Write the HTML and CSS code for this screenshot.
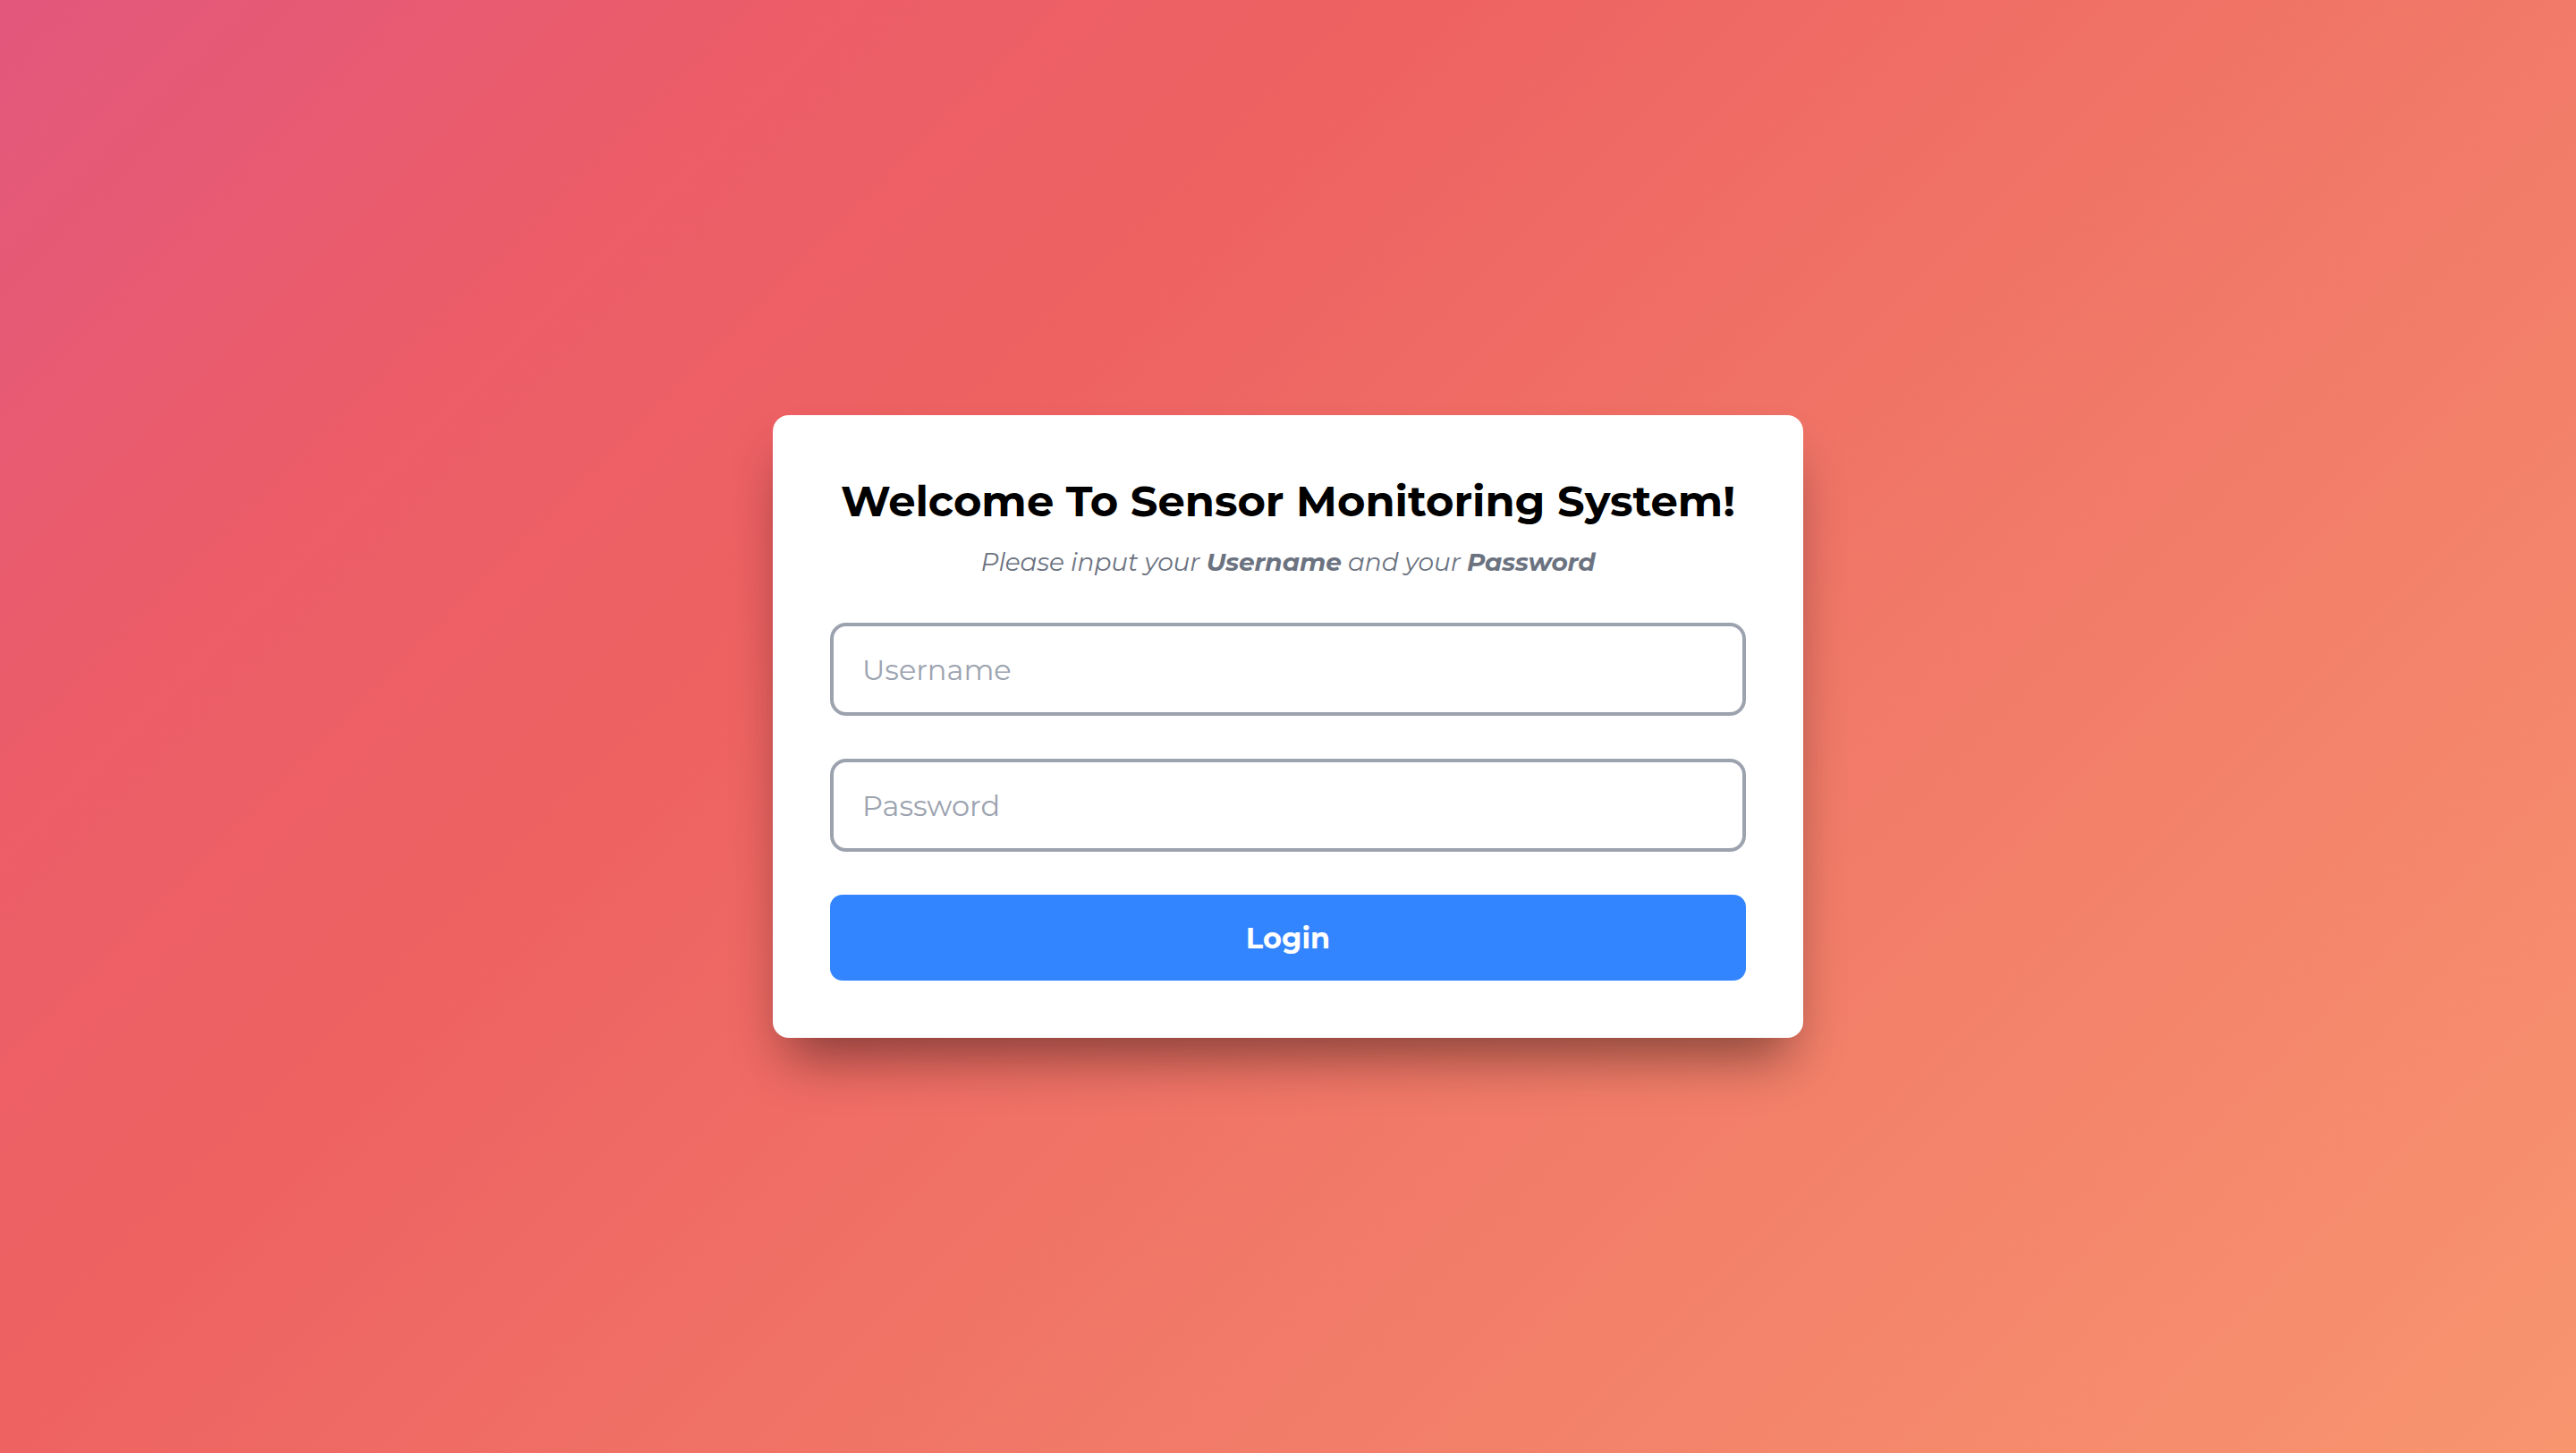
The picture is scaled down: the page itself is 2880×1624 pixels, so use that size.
FILE: index.html
```html
<!DOCTYPE html>
<html lang="en">
<head>
<meta charset="utf-8">
<title>Sensor Monitoring System - Login</title>
<link rel="stylesheet" href="styles.css">
</head>
<body>
<main class="page">
  <form class="card" onsubmit="return false;">
    <h1 class="title">Welcome To Sensor Monitoring System!</h1>
    <p class="subtitle">Please input your <b>Username</b> and your <b>Password</b></p>
    <div class="fields">
      <input class="field" type="text" placeholder="Username">
      <input class="field" type="password" placeholder="Password">
      <button class="btn" type="submit">Login</button>
    </div>
  </form>
</main>
</body>
</html>
```

FILE: styles.css
```css
* { box-sizing: border-box; }
html, body { margin: 0; padding: 0; height: 100%; }
body {
  font-family: Montserrat, Inter, "Open Sans", sans-serif;
  background: linear-gradient(135deg, #e3577d 0%, #ec5d68 20%, #ee6262 35%, #f17a68 64%, #f8956f 100%);
  min-height: 1624px;
}
.page {
  min-height: 1624px;
  display: flex;
  align-items: center;
  justify-content: center;
}
.card {
  width: 1152px;
  background: #ffffff;
  border-radius: 18px;
  padding: 64px;
  box-shadow: 0 36px 60px -16px rgba(0, 0, 0, 0.45);
  display: flex;
  flex-direction: column;
  align-items: center;
}
.title {
  margin: 0;
  font-size: 48px;
  line-height: 64px;
  font-weight: 700;
  color: #000;
  text-align: center;
}
.subtitle {
  margin: 16px 0 0;
  font-size: 28px;
  line-height: 40px;
  font-style: italic;
  letter-spacing: -0.1px;
  color: #6b7280;
  text-align: center;
}
.subtitle b { font-weight: 700; }
.fields {
  margin-top: 48px;
  width: 100%;
  display: flex;
  flex-direction: column;
  gap: 48px;
}
.field {
  width: 100%;
  height: 104px;
  border: 4px solid #9ca3af;
  border-radius: 18px;
  padding: 0 32px;
  font-family: inherit;
  font-size: 32px;
  color: #111827;
  background: #fff;
  outline: none;
}
.field::placeholder { color: #9ca3af; }
.btn {
  width: 100%;
  height: 96px;
  border: none;
  border-radius: 14px;
  background: #3385ff;
  color: #fff;
  font-family: inherit;
  font-size: 32px;
  font-weight: 700;
  cursor: pointer;
}
```
